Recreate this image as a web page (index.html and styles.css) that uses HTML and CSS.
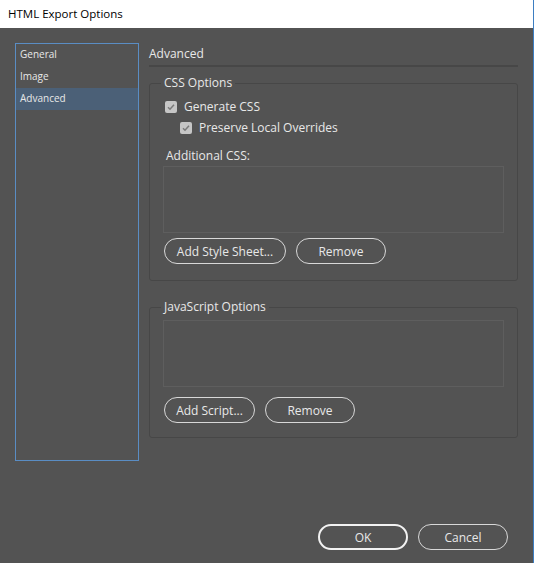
FILE: index.html
```html
<!DOCTYPE html>
<html lang="en">
<head>
    <meta charset="UTF-8">
    <title>HTML Export Options</title>
    <link rel="stylesheet" href="styles.css">
</head>
<body>
    <div class="window">
        <div class="titlebar">HTML Export Options</div>
        <div class="dialog">
            <div class="dialog-body">
                <ul class="side-list">
                    <li>General</li>
                    <li>Image</li>
                    <li class="active">Advanced</li>
                </ul>
                <div class="panel">
                    <div class="panel-title">Advanced</div>

                    <fieldset class="group css-group">
                        <legend>CSS Options</legend>
                        <label class="check">
                            <span class="box"><svg viewBox="0 0 12 12" width="12" height="12"><path d="M3 6.2l2 2 4-4.4" fill="none" stroke="#7a7a7a" stroke-width="1.5"/></svg></span>
                            Generate CSS
                        </label>
                        <label class="check sub">
                            <span class="box"><svg viewBox="0 0 12 12" width="12" height="12"><path d="M3 6.2l2 2 4-4.4" fill="none" stroke="#7a7a7a" stroke-width="1.5"/></svg></span>
                            Preserve Local Overrides
                        </label>
                        <div class="field-label">Additional CSS:</div>
                        <div class="list-box"></div>
                        <div class="btn-row">
                            <button class="btn btn-wide">Add Style Sheet...</button>
                            <button class="btn">Remove</button>
                        </div>
                    </fieldset>

                    <fieldset class="group js-group">
                        <legend>JavaScript Options</legend>
                        <div class="list-box"></div>
                        <div class="btn-row">
                            <button class="btn btn-script">Add Script...</button>
                            <button class="btn">Remove</button>
                        </div>
                    </fieldset>
                </div>
            </div>
            <div class="footer">
                <button class="btn btn-ok">OK</button>
                <button class="btn">Cancel</button>
            </div>
        </div>
    </div>
</body>
</html>
```

FILE: styles.css
```css
* {
    margin: 0;
    padding: 0;
    box-sizing: border-box;
}

body {
    font-family: 'Open Sans', 'Noto Sans', sans-serif;
    background: #535353;
    width: 534px;
    height: 563px;
    overflow: hidden;
}

.window {
    height: 563px;
    border-right: 1px solid #3d7ec2;
    display: flex;
    flex-direction: column;
}

.titlebar {
    height: 28px;
    background: #fff;
    color: #000;
    font-size: 11.5px;
    padding: 6px 0 0 8px;
}

.dialog {
    flex: 1;
    background: #535353;
    color: #e8e8e8;
    font-size: 12px;
    padding: 15px 0 0 15px;
}

.dialog-body {
    display: flex;
    gap: 10px;
}

.side-list {
    list-style: none;
    width: 124px;
    height: 418px;
    border: 1px solid #5a8dc4;
    font-size: 10px;
}

.side-list li {
    height: 22px;
    line-height: 21px;
    padding-left: 4px;
}

.side-list li.active {
    background: #4b6077;
}

.panel {
    width: 369px;
}

.panel-title {
    font-size: 12px;
    line-height: 16px;
    padding-top: 3px;
    padding-bottom: 3px;
    border-bottom: 2px solid #474747;
}

.group {
    border: 1px solid #474747;
    border-radius: 3px;
    padding: 0 13px 0 13px;
}

.group legend {
    padding: 0 3px;
    margin-left: -2px;
    line-height: 16px;
}

.css-group {
    margin-top: 8px;
    height: 206px;
}

.js-group {
    margin-top: 18px;
    height: 139px;
}

.check {
    display: flex;
    align-items: center;
    gap: 7px;
    height: 21px;
    margin-left: 2px;
}

.css-group .check:first-of-type {
    margin-top: 5px;
}

.check.sub {
    margin-left: 17px;
}

.box {
    width: 12px;
    height: 12px;
    background: #c6c6c6;
    border-radius: 2px;
    display: flex;
}

.field-label {
    margin-top: 10px;
    margin-left: 3px;
    line-height: 16px;
}

.list-box {
    height: 67px;
    border: 1px solid #5e5e5e;
    margin-top: 2px;
}

.js-group .list-box {
    margin-top: 5px;
}

.btn-row {
    display: flex;
    gap: 10px;
    margin-top: 5px;
    margin-left: 1px;
}

.js-group .btn-row {
    margin-top: 10px;
}

.btn {
    font-family: inherit;
    font-size: 12px;
    color: #e8e8e8;
    background: transparent;
    border: 1px solid #d8d8d8;
    border-radius: 13px;
    height: 26px;
    width: 90px;
}

.btn-wide {
    width: 122px;
}

.btn-script {
    width: 91px;
}

.footer {
    display: flex;
    justify-content: flex-end;
    gap: 10px;
    margin-top: 63px;
    padding-right: 25px;
}

.btn-ok {
    border: 2px solid #f2f2f2;
}
```
